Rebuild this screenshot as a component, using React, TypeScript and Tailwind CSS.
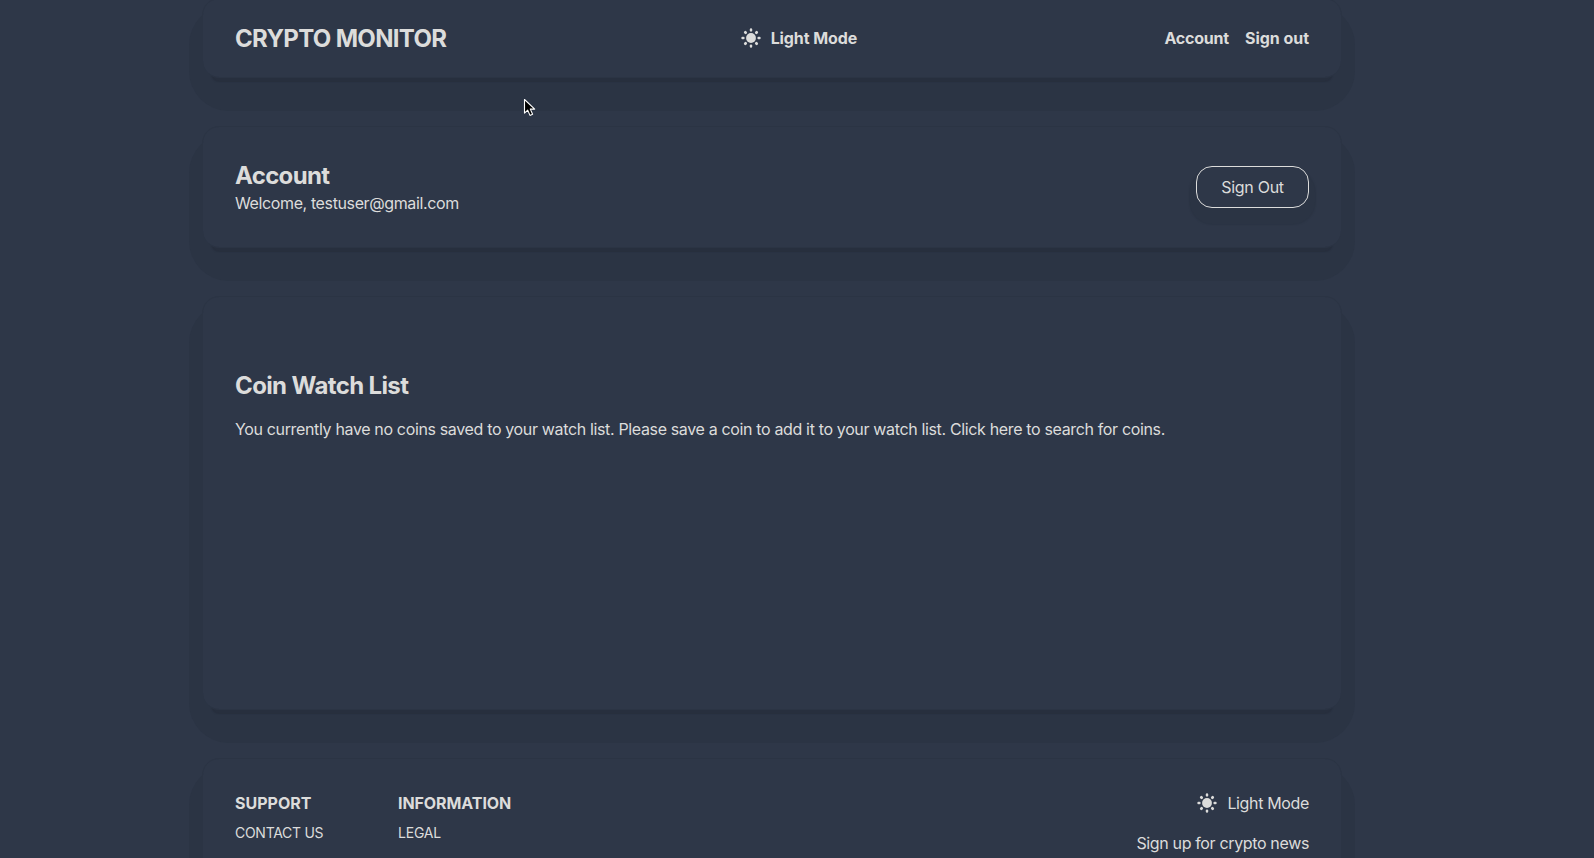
import React from "react";

const card =
  "relative w-full shrink-0 rounded-[17px] border border-[#2b3444] bg-[#2e3748] bg-clip-padding px-[32px] shadow-[0_13px_1px_-9px_#272f3e] before:absolute before:-inset-x-[14px] before:top-[6px] before:-bottom-[34px] before:-z-10 before:rounded-[40px] before:bg-[#2b3444] before:content-['']";

const heading = "relative top-px text-2xl font-bold tracking-[-0.67px]";

function SunIcon() {
  return (
    <svg className="mr-2 size-6" viewBox="0 0 24 24" fill="currentColor">
      <circle cx="12" cy="12" r="4.9" />
      {[0, 90, 180, 270].map((angle) => (
        <rect key={angle} x="10.8" y="2.3" width="2.4" height="3.3" rx="1.2" transform={`rotate(${angle} 12 12)`} />
      ))}
      {[45, 135, 225, 315].map((angle) => (
        <rect key={angle} x="10.6" y="2.6" width="2.8" height="3.2" rx="1.3" transform={`rotate(${angle} 12 12)`} />
      ))}
    </svg>
  );
}

function ThemeToggle() {
  return (
    <div className="flex items-center">
      <SunIcon />
      <span>Light Mode</span>
    </div>
  );
}

export default function App() {
  return (
    <div
      className="relative h-[858px] w-full overflow-hidden bg-[#2e3748] text-base tracking-[-0.35px] text-[#dcdcdb]"
      style={{ fontFamily: 'Inter, "Liberation Sans", sans-serif' }}
    >
      <div className="isolate -mt-[2px] ml-[202px] flex w-[1140px] flex-col gap-12">
        <header className={`${card} flex h-[80px] items-center justify-between font-bold tracking-[-0.1px]`}>
          <h1 className={heading}>CRYPTO MONITOR</h1>
          <div className="pr-[15px]">
            <ThemeToggle />
          </div>
          <nav className="flex gap-4">
            <a className="tracking-[-0.2px]">Account</a>
            <a className="tracking-[-0.04px]">Sign out</a>
          </nav>
        </header>

        <section className={`${card} flex h-[122px] items-center justify-between`}>
          <div>
            <h2 className={heading}>Account</h2>
            <p className="tracking-[-0.38px]">Welcome, testuser@gmail.com</p>
          </div>
          <button className="h-[42px] w-[113px] rounded-2xl border border-[#dcdcdb] bg-[#2e3748] tracking-[-0.28px] shadow-[0_10px_1px_7px_#2b3444]">
            Sign Out
          </button>
        </section>

        <section className={`${card} h-[414px] pt-[73px]`}>
          <h2 className="text-2xl font-bold tracking-[-0.62px]">Coin Watch List</h2>
          <p className="pt-[15px]">
            You currently have no coins saved to your watch list. Please save a coin to add it to your watch list. Click
            here to search for coins.
          </p>
        </section>

        <footer className={`${card} flex h-[240px] justify-between pt-[32px]`}>
          <div className="flex uppercase">
            <div className="w-[163px]">
              <h3 className="font-bold tracking-[0px]">Support</h3>
              <p className="pt-2 text-sm tracking-[-0.28px]">Contact us</p>
            </div>
            <div>
              <h3 className="font-bold tracking-[-0.08px]">Information</h3>
              <p className="pt-2 text-sm tracking-[-0.2px]">Legal</p>
            </div>
          </div>
          <div className="flex flex-col items-end">
            <ThemeToggle />
            <p className="pt-4">Sign up for crypto news</p>
          </div>
        </footer>
      </div>

      <svg className="absolute left-[523px] top-[98px]" width="14" height="20" viewBox="0 0 14 20">
        <path
          d="M1.5 1.5v13.6l3.2-3 2.3 5.3 2.6-1.1-2.3-5.2h4.4z"
          fill="#000"
          stroke="#fff"
          strokeWidth="1.1"
          strokeLinejoin="round"
        />
      </svg>
    </div>
  );
}
